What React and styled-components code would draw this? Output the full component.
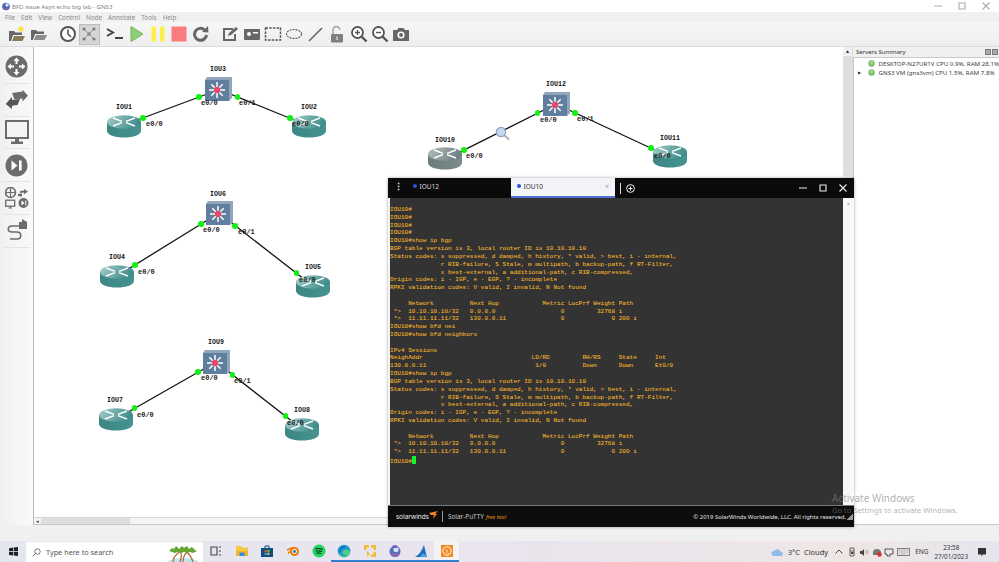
import styled, { createGlobalStyle } from "styled-components";

const GlobalStyle = createGlobalStyle`
  html, body { margin: 0; padding: 0; background: #f0f0f0; }
  * { box-sizing: border-box; }
`;

const Page = styled.div`
  position: relative;
  width: 999px;
  height: 562px;
  overflow: hidden;
  display: flex;
  flex-direction: column;
  font-family: "Noto Sans", "Liberation Sans", sans-serif;
  background: #f0f0f0;
`;

const TitleBar = styled.div`
  height: 12px;
  background: #fff;
  display: flex;
  align-items: center;
  padding-left: 2px;
  gap: 2px;
  font-size: 6.1px;
  color: #7f7f7f;
`;

const TitleText = styled.span`
  flex: 1;
`;

const WindowControls = styled.div`
  display: flex;
  gap: 14px;
  padding-right: 8px;
  line-height: 0;
`;

const MenuBar = styled.div`
  height: 10px;
  background: #f0f0f0;
  display: flex;
  align-items: center;
  padding-left: 5px;
  gap: 6px;
  font-size: 6.3px;
  color: #8a8a8a;
`;

const Toolbar = styled.div`
  height: 25px;
  background: linear-gradient(#f6f6f6, #eeeeee);
  border-bottom: 1px solid #dcdcdc;
  display: flex;
  align-items: center;
  padding-left: 6.5px;
`;

const ToolGroup = styled.div`
  display: flex;
  margin-right: ${(p) => p.$gap || 0}px;
`;

const ToolButton = styled.div`
  width: 21.4px;
  height: 21px;
  display: flex;
  align-items: center;
  justify-content: center;
  background: ${(p) => (p.$pressed ? "#d6d6d6" : "transparent")};
  border: 1px solid ${(p) => (p.$pressed ? "#bdbdbd" : "transparent")};
`;

const Main = styled.div`
  height: 478px;
  display: flex;
`;

const LeftDock = styled.div`
  width: 34px;
  background: linear-gradient(90deg, #f0f0f0, #fafafa);
  border-right: 1px solid #b9b9b9;
  display: flex;
  flex-direction: column;
  padding-top: 4px;
`;

const DockSlot = styled.div`
  height: 32.8px;
  display: flex;
  align-items: center;
  justify-content: center;
  border-bottom: 1px solid #e4e4e4;
  margin: 0 3px;
`;

const CanvasPane = styled.div`
  flex: 1;
  display: grid;
  grid-template-columns: 1fr 9px;
  grid-template-rows: 1fr 7px;
  border-right: 1px solid #ddd;
  border-bottom: 1px solid #c8c8c8;
`;

const Canvas = styled.div`
  position: relative;
  background: #fff;
  overflow: hidden;
`;

const LinkLayer = styled.svg`
  position: absolute;
  left: 0;
  top: 0;
`;

const NodeName = styled.span`
  position: absolute;
  left: ${(p) => p.$x - 34}px;
  top: ${(p) => p.$y - 47 - 4}px;
  transform: translateX(-50%);
  font: bold 6.6px/8px "Liberation Mono", monospace;
  color: #111;
`;

const PortName = styled.span`
  position: absolute;
  left: ${(p) => p.$x - 34}px;
  top: ${(p) => p.$y - 47 - 4}px;
  font: bold 7px/8px "Liberation Mono", monospace;
  color: #1e1e22;
`;

const NodeIcon = styled.div`
  position: absolute;
  left: ${(p) => p.$x - 34}px;
  top: ${(p) => p.$y - 47}px;
  line-height: 0;
`;

const Dot = styled.i`
  position: absolute;
  left: ${(p) => p.$x - 34 - 2.75}px;
  top: ${(p) => p.$y - 47 - 2.75}px;
  width: 5.5px;
  height: 5.5px;
  border-radius: 50%;
  background: #14f014;
`;

const Magnifier = styled.div`
  position: absolute;
  left: ${495 - 34}px;
  top: ${126 - 47}px;
  line-height: 0;
`;

const VScroll = styled.div`
  background: #f1f1f1;
  display: flex;
  flex-direction: column;
  align-items: center;
  padding-top: 1px;
  font-size: 5px;
  line-height: 6px;
  color: #333;
`;

const VThumb = styled.div`
  width: 100%;
  height: 120px;
  margin-top: 2px;
  background: #dedede;
`;

const HScroll = styled.div`
  background: #f4f4f4;
  display: flex;
  align-items: stretch;
  font-size: 5px;
  line-height: 7px;
  color: #333;
  border-top: 1px solid #d6d6d6;
`;

const HArrow = styled.span`
  width: 7px;
  text-align: center;
`;

const HThumb = styled.div`
  width: 89px;
  background: #dedede;
`;

const ServersDock = styled.div`
  width: 146px;
  display: flex;
  flex-direction: column;
  background: #f0f0f0;
`;

const DockHeader = styled.div`
  height: 10px;
  padding-left: 3px;
  display: flex;
  align-items: center;
  justify-content: space-between;
  font-size: 6px;
  color: #333;
`;

const DockButtons = styled.div`
  display: flex;
  gap: 1px;
  padding-right: 1px;
`;

const DockButton = styled.i`
  width: 6px;
  height: 6px;
  background: #a8a8a8;
  border: 1px solid #7a7a7a;
`;

const ServerTree = styled.div`
  flex: 1;
  background: #fff;
  border: 1px solid #c9c9c9;
  border-right: 0;
  padding-top: 0.5px;
`;

const ServerRow = styled.div`
  height: 9.5px;
  display: flex;
  align-items: center;
  padding-left: 4px;
  font-size: 6.15px;
  color: #3c3c3c;
  white-space: nowrap;
`;

const Caret = styled.span`
  flex: none;
  width: 8px;
  font-size: 4px;
  color: #222;
`;

const ServerLed = styled.i`
  flex: none;
  width: 7px;
  height: 7px;
  border-radius: 50%;
  margin: 0 4px 0 1.5px;
  background: radial-gradient(circle at 50% 30%, #a6e58e, #58b04a);
  border: 1px solid #8fb488;
`;

const StatusStrip = styled.div`
  height: 16px;
  background: #f0f0f0;
`;

const Taskbar = styled.div`
  height: 21px;
  display: flex;
  align-items: center;
  background: linear-gradient(90deg, #e4e7ee, #e9e4ee 45%, #ece6ea 75%, #efe6e4 85%, #e4e6ee);
  color: #222;
`;

const StartButton = styled.div`
  width: 26px;
  display: flex;
  justify-content: center;
`;

const SearchBox = styled.div`
  width: 177px;
  height: 20px;
  margin-top: 1px;
  padding-left: 6px;
  background: #fff;
  display: flex;
  align-items: center;
  gap: 5px;
  color: #555;
  font-size: 7.3px;
  overflow: hidden;
`;

const SearchText = styled.span`
  flex: 1;
`;

const TaskIcons = styled.div`
  display: flex;
  margin-left: 0.5px;
  height: 100%;
`;

const TaskIcon = styled.div`
  width: 25.6px;
  height: 100%;
  display: flex;
  align-items: center;
  justify-content: center;
  background: ${(p) => (p.$active ? "#f4f2f5" : "transparent")};
  border-bottom: 2px solid ${(p) => (p.$open ? "#2f7fd0" : "transparent")};
`;

const Tray = styled.div`
  margin-left: auto;
  display: flex;
  align-items: center;
  height: 100%;
  padding-right: 10.5px;
`;

const Weather = styled.span`
  margin: 0 5px 0 4px;
  font-size: 7.5px;
  word-spacing: 2px;
  color: #333;
`;

const TrayIcon = styled.div`
  width: ${(p) => p.$w || 12.5}px;
  display: flex;
  justify-content: center;
  line-height: 0;
`;

const Lang = styled.span`
  font-size: 6.5px;
  margin: 0 6px 0 3.5px;
  color: #333;
`;

const Clock = styled.div`
  text-align: center;
  font-size: 6.3px;
  line-height: 9px;
  color: #333;
  margin-right: 8px;
`;

const PuttyWindow = styled.div`
  position: absolute;
  left: 388px;
  top: 178px;
  width: 466px;
  height: 349px;
  background: #f4f4f4;
  display: flex;
  flex-direction: column;
  box-shadow: 0 0 3px rgba(0, 0, 0, 0.35);
`;

const TabBar = styled.div`
  height: 20px;
  background: #0b0b0b;
  display: flex;
  align-items: stretch;
  color: #eee;
  font-size: 6.5px;
`;

const MoreDots = styled.div`
  width: 20px;
  text-align: center;
  line-height: 18px;
  font-weight: 700;
  font-size: 9px;
`;

const Tab = styled.div`
  width: ${(p) => p.$w}px;
  display: flex;
  align-items: center;
  padding-left: ${(p) => (p.$active ? 5.5 : 4.5)}px;
  gap: 3px;
  padding-bottom: 2px;
  background: ${(p) => (p.$active ? "#f3f4f8" : "transparent")};
  color: ${(p) => (p.$active ? "#333" : "#ddd")};
  border-bottom: 2px solid ${(p) => (p.$active ? "#4f6fd8" : "transparent")};
`;

const TabDot = styled.i`
  width: 4px;
  height: 4px;
  border-radius: 50%;
  background: #2c54e0;
`;

const TabClose = styled.span`
  margin-left: auto;
  margin-right: 6px;
  color: #999;
  font-size: 7px;
`;

const TabTools = styled.div`
  flex: 1;
  display: flex;
  align-items: center;
  padding-left: 5px;
  gap: 5px;
`;

const TabDivider = styled.i`
  width: 1px;
  height: 11px;
  background: #ddd;
`;

const TabWinButtons = styled.div`
  margin-left: auto;
  display: flex;
  gap: 10px;
  padding-right: 6px;
  line-height: 0;
`;

const TermRow = styled.div`
  flex: 1;
  display: flex;
  padding-left: 2px;
  min-height: 0;
`;

const Terminal = styled.pre`
  margin: 0;
  width: 453px;
  background: #333333;
  padding-top: 8px;
  font: 6px/7.81px "Liberation Mono", monospace;
  letter-spacing: 0.03px;
  color: #e4a62e;
  text-shadow: 0 0 0.4px rgba(228, 166, 46, 0.6);
  overflow: hidden;
`;

const Cursor = styled.i`
  display: inline-block;
  width: 4px;
  height: 8px;
  vertical-align: -1.5px;
  background: #18f02a;
`;

const TermScroll = styled.div`
  flex: 1;
  background: #f8f8f8;
  text-align: center;
  font-size: 5px;
  line-height: 10px;
  color: #bbb;
`;

const PuttyFooter = styled.div`
  height: 22px;
  background: #0d0d0d;
  border-top: 1px solid #777;
  display: flex;
  align-items: center;
  padding-left: 8px;
  padding-right: 1px;
  color: #ddd;
`;

const SolarBrand = styled.span`
  font-size: 6.5px;
  color: #eee;
`;

const SolarMark = styled.svg`
  margin-bottom: 3px;
`;

const FooterDivider = styled.i`
  width: 1px;
  height: 11px;
  margin: 0 5px 0 4px;
  background: #999;
`;

const ProductName = styled.span`
  font-size: 6.4px;
  color: #ccc;
`;

const FreeTool = styled.span`
  margin-left: 2px;
  font-size: 5.5px;
  font-style: italic;
  color: #e59a1e;
`;

const Copyright = styled.span`
  margin-left: auto;
  margin-right: 1px;
  font-size: 5.95px;
  color: #e4e4e4;
`;

const Watermark = styled.div`
  position: absolute;
  left: 832px;
  top: 492px;
  color: rgba(125, 125, 125, 0.62);
  white-space: nowrap;
`;

const WatermarkTitle = styled.div`
  font-size: 10px;
  line-height: 12px;
`;

const WatermarkSub = styled.div`
  font-size: 7.6px;
  line-height: 12px;
`;

/* ---- drawings ---- */

const Router = ({ gray }) => {
  const id = gray ? "rg" : "rt";
  return (
    <svg width="34" height="23" viewBox="0 0 34 23">
      <defs>
        <linearGradient id={id} x1="0" x2="1" y1="0" y2="0">
          <stop offset="0" stopColor={gray ? "#6c7c7c" : "#3c8684"} />
          <stop offset="1" stopColor={gray ? "#7c8c8c" : "#459390"} />
        </linearGradient>
        <linearGradient id={id + "t"} x1="0" x2="1" y1="0" y2="0.3">
          <stop offset="0" stopColor={gray ? "#b6c0c0" : "#a9cfcd"} />
          <stop offset="1" stopColor={gray ? "#6f8080" : "#3f8e8c"} />
        </linearGradient>
      </defs>
      <path d="M0 7v9c0 3.6 7.6 6.6 17 6.6s17-3 17-6.6V7z" fill={`url(#${id})`} />
      <ellipse cx="17" cy="7" rx="17" ry="6.8" fill={`url(#${id}t)`} />
      <path
        d="M6 3l9 3.4M6 11l9-3.4M28 3l-9 3.4M28 11l-9-3.4"
        stroke="#fff"
        strokeWidth="1.4"
        fill="none"
      />
    </svg>
  );
};

const Switch = () => (
  <svg width="27" height="25" viewBox="0 0 27 25">
    <path d="M2 0h25v21l-3 3H0V3z" fill="#8fa6bd" />
    <rect x="0" y="3" width="24" height="21" fill="#607f9f" />
    <path
      d="M12 5v16M4 13h16M6.3 7.3l11.4 11.4M17.7 7.3L6.3 18.7"
      stroke="#fff"
      strokeWidth="1.5"
    />
    <circle cx="12" cy="13" r="3.2" fill="#e8476b" />
  </svg>
);

const MagnifierIcon = () => (
  <svg width="15" height="15" viewBox="0 0 15 15">
    <path d="M8.5 8.5l5 4.5" stroke="#b3b3b3" strokeWidth="2.2" strokeLinecap="round" />
    <circle cx="6" cy="6" r="4.6" fill="#c6d8ee" stroke="#8ba3c6" strokeWidth="1.2" />
  </svg>
);

const G = "#666";

const ToolIcon = ({ kind }) => {
  const s = { width: 18, height: 18, viewBox: "0 0 18 18" };
  switch (kind) {
    case "new":
      return (
        <svg {...s}>
          <path d="M1 16V6h5l1.5 1.5H14V10H5l-2 6z" fill={G} />
          <path d="M4 16l2-5h11l-2.5 5z" fill="#8a7a58" />
          <circle cx="13" cy="4" r="2.6" fill="#f5e640" />
        </svg>
      );
    case "open":
      return (
        <svg {...s}>
          <path d="M1 15V5h5l1.5 1.5H14V9H5l-2 6z" fill={G} />
          <path d="M4 15l2-5h11l-2.5 5z" fill="#8c8c8c" />
        </svg>
      );
    case "clock":
      return (
        <svg {...s}>
          <circle cx="9" cy="9" r="7" fill="#fff" stroke="#555" strokeWidth="2" />
          <path d="M9 4.5V9l3 3" fill="none" stroke="#555" strokeWidth="1.6" />
        </svg>
      );
    case "links":
      return (
        <svg {...s}>
          <path d="M5 5l8 8M13 5l-8 8" stroke="#999" strokeWidth="1" />
          <circle cx="4" cy="4" r="1.5" fill="#777" />
          <circle cx="14" cy="4" r="1.5" fill="#777" />
          <circle cx="4" cy="14" r="1.5" fill="#777" />
          <circle cx="14" cy="14" r="1.5" fill="#777" />
          <circle cx="9" cy="9" r="1.8" fill="#888" />
        </svg>
      );
    case "console":
      return (
        <svg {...s}>
          <path d="M1 4l6 3.5L1 11" fill="none" stroke="#444" strokeWidth="2" />
          <path d="M9 13h8" stroke="#444" strokeWidth="2" />
        </svg>
      );
    case "play":
      return (
        <svg {...s}>
          <path d="M3 1.5l12 7.5-12 7.5z" fill="#8ccf76" stroke="#73b45e" />
        </svg>
      );
    case "pause":
      return (
        <svg {...s}>
          <rect x="2.5" y="1.5" width="4.5" height="15" fill="#fbef4e" />
          <rect x="11" y="1.5" width="4.5" height="15" fill="#fbef4e" />
        </svg>
      );
    case "stop":
      return (
        <svg {...s}>
          <rect x="1.5" y="1.5" width="15" height="15" fill="#fb7c7c" />
        </svg>
      );
    case "reload":
      return (
        <svg {...s}>
          <path d="M14.5 10a6 6 0 1 1-2-5.2" fill="none" stroke={G} strokeWidth="3" />
          <path d="M10 7l6.5.5L16 1z" fill={G} />
        </svg>
      );
    case "note":
      return (
        <svg {...s}>
          <path d="M2 3h10v2H4v9h9V9h2v7H2z" fill={G} />
          <path d="M7 11l1-3 7-6 2 2-7 6z" fill={G} />
        </svg>
      );
    case "image":
      return (
        <svg {...s}>
          <rect x="1" y="4" width="16" height="11" rx="1" fill={G} />
          <circle cx="6" cy="9" r="2" fill="#fff" />
          <path d="M10 7h5v1.5h-5z" fill="#fff" />
        </svg>
      );
    case "rect":
      return (
        <svg {...s}>
          <rect x="1.5" y="3" width="15" height="12" fill="none" stroke="#555" strokeWidth="1.5" strokeDasharray="2.5 1.2" />
        </svg>
      );
    case "ellipse":
      return (
        <svg {...s}>
          <ellipse cx="9" cy="9" rx="7.5" ry="4.5" fill="none" stroke="#555" strokeWidth="1.1" strokeDasharray="2 1" />
        </svg>
      );
    case "line":
      return (
        <svg {...s}>
          <path d="M2 16L15 3" stroke={G} strokeWidth="1.6" />
        </svg>
      );
    case "lock":
      return (
        <svg {...s}>
          <path d="M5 9V5a3.4 3.4 0 0 1 6.8 0" fill="none" stroke="#aaa" strokeWidth="1.6" />
          <rect x="3" y="9" width="12" height="8.5" rx="1" fill="#7f7f7f" />
          <rect x="8" y="11.5" width="2" height="3.5" fill="#bbb" />
        </svg>
      );
    case "zoomin":
    case "zoomout":
      return (
        <svg {...s}>
          <circle cx="7.5" cy="7.5" r="5.5" fill="#fff" stroke="#555" strokeWidth="1.8" />
          <path d="M11.5 11.5l5 5" stroke="#555" strokeWidth="2.4" />
          <path d={kind === "zoomin" ? "M5 7.5h5M7.5 5v5" : "M5 7.5h5"} stroke="#555" strokeWidth="1.4" />
        </svg>
      );
    default:
      return (
        <svg {...s}>
          <path d="M1 5h4l1.5-2h5L13 5h4v11H1z" fill={G} />
          <circle cx="9" cy="10" r="3.6" fill="#fff" />
          <circle cx="9" cy="10" r="2" fill={G} />
        </svg>
      );
  }
};

const DockIcon = ({ kind }) => {
  const D = "#6c6c6c";
  if (kind === "router")
    return (
      <svg width="23" height="23" viewBox="0 0 23 23">
        <circle cx="11.5" cy="11.5" r="11" fill={D} />
        <path
          d="M11.5 2.5l3 3.5h-2v3h-2V6h-2zM11.5 20.5l3-3.5h-2v-3h-2v3h-2zM2.5 11.5l3.5-3v2h3v2H6v2zM20.5 11.5l-3.5-3v2h-3v2h3v2z"
          fill="#fff"
        />
      </svg>
    );
  if (kind === "switch")
    return (
      <svg width="24" height="21" viewBox="0 0 24 21">
        <path d="M7 4l10.5-1.5V.7L23 6.7l-5.5 5.8V9.5L9.5 10.5z" fill={D} />
        <path d="M.7 15L7 8v3l8-1-2.5 6-5.5.7V20z" fill="#555" />
      </svg>
    );
  if (kind === "monitor")
    return (
      <svg width="24" height="25" viewBox="0 0 24 25">
        <rect x="1" y="1" width="22" height="17" fill="#f4f4f4" stroke={D} strokeWidth="2" />
        <path d="M10 18h4v3.5h4V24H6v-2.5h4z" fill={D} />
      </svg>
    );
  if (kind === "skip")
    return (
      <svg width="23" height="23" viewBox="0 0 23 23">
        <circle cx="11.5" cy="11.5" r="11" fill={D} />
        <path d="M6.5 6.5l6 5-6 5z" fill="#fff" />
        <rect x="14" y="6.5" width="2.6" height="10" fill="#fff" />
      </svg>
    );
  if (kind === "all")
    return (
      <svg width="24" height="22" viewBox="0 0 24 22">
        <circle cx="5.5" cy="5.5" r="5" fill="none" stroke={D} strokeWidth="1.6" />
        <path d="M5.5 1v9M1 5.5h9" stroke={D} strokeWidth="1.2" />
        <path d="M15 4l4-.6V2l4 2.6-4 2.6V5.5l-4 .6zM13 7l4-.6V5l.01 4.6L13 9z" fill={D} />
        <rect x="0.7" y="13.2" width="9" height="6" fill="none" stroke={D} strokeWidth="1.3" />
        <path d="M3.5 21h3.5M5.2 19v2" stroke={D} />
        <circle cx="18.5" cy="16" r="5" fill={D} />
        <path d="M16.5 13.5l3 2.5-3 2.5zM20.3 13.5h1v5h-1z" fill="#fff" />
      </svg>
    );
  return (
    <svg width="24" height="24" viewBox="0 0 24 24">
      <path d="M15 7H7c-5 0-5 6 0 6h5c5 0 5 7 0 7H5" fill="none" stroke={D} strokeWidth="1.6" />
      <rect x="14" y="3" width="8" height="7" fill={D} />
      <path d="M17 0l5 3h-5z" fill={D} />
    </svg>
  );
};

const WinLogo = () => (
  <svg width="9" height="9" viewBox="0 0 9 9">
    <path d="M0 1.2l4-.6v3.6H0zM4.7.5L9 0v4.2H4.7zM0 4.9h4v3.6l-4-.6zM4.7 4.9H9V9l-4.3-.6z" fill="#222" />
  </svg>
);

const SearchGlass = () => (
  <svg width="9" height="9" viewBox="0 0 9 9">
    <circle cx="5.5" cy="3.5" r="2.7" fill="none" stroke="#555" strokeWidth=".8" />
    <path d="M3.5 5.5L.7 8.3" stroke="#555" strokeWidth=".9" />
  </svg>
);

const TreeDoodle = () => (
  <svg width="38" height="20" viewBox="0 0 38 20">
    <ellipse cx="18" cy="21" rx="16" ry="5" fill="#bfe4ee" />
    <path d="M8 20c0-6 4-8 7-10 3 2 1 6 0 10M18 20c0-5 2-8 4-10 3 3 5 6 6 10" fill="none" stroke="#b3662f" strokeWidth="1.2" />
    <path d="M4 9l3-3 2 1 2-3 3 3 3-3 2 2 3-2 2 3 3-2 3 3 2 1-4 2-3-1-3 1-3-1-3 1-3-1-3 1z" fill="#63a632" />
  </svg>
);

const AppIcon = ({ kind }) => {
  const s = { width: 14, height: 14, viewBox: "0 0 14 14" };
  switch (kind) {
    case "taskview":
      return (
        <svg {...s}>
          <path d="M2 3h6v8H2zM10 3h2M10 7h2M10 11h2" fill="none" stroke="#444" strokeWidth="1.1" />
        </svg>
      );
    case "explorer":
      return (
        <svg {...s}>
          <path d="M1 2h5l1 1.5h6V12H1z" fill="#f5c842" />
          <rect x="1" y="7" width="12" height="5" fill="#f0b52d" />
          <rect x="4.5" y="8.5" width="5" height="3.5" fill="#2f8fd8" />
        </svg>
      );
    case "store":
      return (
        <svg {...s}>
          <path d="M1 4h12v9H1z" fill="#0f4d82" />
          <path d="M5 4V2h4v2" fill="none" stroke="#0f4d82" />
          <rect x="4.5" y="6" width="2.2" height="2.2" fill="#e8502c" />
          <rect x="7.3" y="6" width="2.2" height="2.2" fill="#7cbb2c" />
          <rect x="4.5" y="8.8" width="2.2" height="2.2" fill="#2ea3e8" />
          <rect x="7.3" y="8.8" width="2.2" height="2.2" fill="#f5b82c" />
        </svg>
      );
    case "blender":
      return (
        <svg {...s}>
          <path d="M1 6l6-2.5M2 9l5-3" stroke="#e87d0d" strokeWidth="1.6" />
          <circle cx="8.5" cy="7.5" r="4.5" fill="#e87d0d" />
          <circle cx="8.5" cy="7.5" r="2.4" fill="#fff" />
          <circle cx="8.5" cy="7.5" r="1.4" fill="#2a6aa8" />
        </svg>
      );
    case "spotify":
      return (
        <svg {...s}>
          <circle cx="7" cy="7" r="6.5" fill="#1ed760" />
          <path d="M3.2 5c2.5-.8 5.5-.6 7.6.6M3.8 7.2c2-.6 4.5-.4 6.2.6M4.4 9.2c1.6-.4 3.5-.3 4.8.5" fill="none" stroke="#111" strokeWidth="1" />
        </svg>
      );
    case "edge":
      return (
        <svg {...s}>
          <circle cx="7" cy="7" r="6.3" fill="#1b9ad6" />
          <path d="M13 8c-.7 3.2-3.5 5.3-6 5.3-2.5 0-4.4-2-4-4 .5 2 2.6 3 4.6 2.8 1.2-.1 2.2-.6 2-1.2-2.6.2-4.4-1-4.2-2.8.2-1.5 2-2.5 4-2.3 2 .2 3.6 1.6 3.6 2.2z" fill="#4ed37c" />
          <path d="M3 8c0-3 2-5 5-4.8" fill="none" stroke="#0c5da8" strokeWidth="1.2" />
        </svg>
      );
    case "yellow":
      return (
        <svg {...s}>
          <path d="M1 1h5v2.5H3.5V6H1zM8 1h5v5h-2.5V3.5H8zM8 8h5v5H8v-2.5h2.5V8zM4 7l3 3-3 3z" fill="#eebf34" />
        </svg>
      );
    case "gns":
      return (
        <svg {...s}>
          <circle cx="7" cy="7.5" r="5.5" fill="#5470b8" />
          <circle cx="8" cy="5.5" r="2.6" fill="#d6e0f2" />
          <path d="M3 10l7-1 1 2-5 2z" fill="#a05bb0" />
          <path d="M4 2l3-1 3 1-1 2H5z" fill="#7a5ac0" />
        </svg>
      );
    case "shark":
      return (
        <svg {...s}>
          <path d="M1 13C5 11 8 6 10 1c1 4 2 9 3 12z" fill="#1a6fc4" />
          <path d="M9 9c1 1 2 2 4 2v2H6z" fill="#4fa0e8" />
        </svg>
      );
    default:
      return (
        <svg {...s}>
          <rect x="1" y="1" width="12" height="12" fill="#f08a1e" />
          <circle cx="7" cy="7" r="4.2" fill="none" stroke="#fff" strokeWidth=".9" />
          <path d="M5.6 5l2 2-2 2M7.5 9.4h1.5" fill="none" stroke="#fff" strokeWidth=".8" />
        </svg>
      );
  }
};

const TrayGlyph = ({ kind }) => {
  const c = "#444";
  const s = { width: 10, height: 10, viewBox: "0 0 10 10" };
  switch (kind) {
    case "chevron":
      return (
        <svg {...s}>
          <path d="M1.5 6.5L5 3l3.5 3.5" fill="none" stroke={c} />
        </svg>
      );
    case "usb":
      return (
        <svg {...s}>
          <path d="M3 1h4v8H3zM3 4h4" fill="none" stroke={c} strokeWidth=".8" />
          <rect x="4" y="5" width="2.5" height="2" fill={c} />
        </svg>
      );
    case "sound":
      return (
        <svg {...s}>
          <path d="M1 4h2l2-2v7L3 7H1z" fill={c} />
          <path d="M6.5 3.5a2.5 2.5 0 0 1 0 3M8 2.5a4 4 0 0 1 0 5" fill="none" stroke="#888" strokeWidth=".7" />
        </svg>
      );
    case "wifi":
      return (
        <svg {...s}>
          <path d="M1 6a4 4 0 0 1 8 0v2H1z" fill="#777" />
          <circle cx="7.5" cy="7.5" r="2.2" fill="#d92b2b" />
        </svg>
      );
    case "net":
      return (
        <svg {...s}>
          <path d="M1 2h8v5H6v2H3V7H1z" fill="none" stroke={c} strokeWidth=".9" />
        </svg>
      );
    default:
      return (
        <svg {...s}>
          <path d="M1 1h8v6.5H6L4.5 9.5V7.5H1z" fill="#333" />
        </svg>
      );
  }
};

const Keyboard = () => (
  <svg width="13" height="8" viewBox="0 0 13 8">
    <rect x=".5" y=".5" width="12" height="7" fill="#e3e3e3" stroke="#666" strokeWidth=".8" />
    <path d="M2 2h9M2 4h9M4 6h5" stroke="#888" strokeWidth=".7" strokeDasharray="1 .6" />
  </svg>
);

const WindowGlyph = ({ kind, color = "#aaa" }) => {
  const d = { min: "M1 5h8", max: "M2 2h6v6H2z", close: "M1.5 1.5l7 7M8.5 1.5l-7 7" }[kind];
  return (
    <svg width="10" height="10" viewBox="0 0 10 10">
      <path d={d} fill="none" stroke={color} strokeWidth={kind === "min" ? 1 : 1.1} />
    </svg>
  );
};

const GnsLogo = () => (
  <svg width="8" height="9" viewBox="0 0 8 9">
    <circle cx="4" cy="4.5" r="3.8" fill="#3f63b5" />
    <circle cx="5" cy="3" r="1.7" fill="#d9e4f5" />
    <path d="M1 6l5-.8-1 3z" fill="#9a55ad" />
  </svg>
);

const PlusCircle = () => (
  <svg width="9" height="9" viewBox="0 0 9 9">
    <circle cx="4.5" cy="4.5" r="3.9" fill="none" stroke="#eee" />
    <path d="M2.5 4.5h4M4.5 2.5v4" stroke="#eee" />
  </svg>
);

const Grip = () => (
  <svg width="6" height="6" viewBox="0 0 6 6">
    <path d="M5 0h1v6H0V5h1V4h1V3h1V2h1V1h1z" fill="#999" />
  </svg>
);

/* ---- data ---- */

const routers = [
  { x: 107, y: 115 },
  { x: 292, y: 115 },
  { x: 100, y: 265 },
  { x: 296, y: 275 },
  { x: 99, y: 408 },
  { x: 285, y: 418 },
  { x: 428, y: 147, gray: true },
  { x: 653, y: 145 },
];

const switches = [
  { x: 205, y: 77 },
  { x: 206, y: 201 },
  { x: 203, y: 350 },
  { x: 543, y: 92 },
];

const nodeNames = [
  ["IOU1", 124, 108], ["IOU2", 309, 108], ["IOU3", 218, 70],
  ["IOU4", 117, 258], ["IOU5", 313, 268], ["IOU6", 218, 195],
  ["IOU7", 115, 401], ["IOU8", 302, 411], ["IOU9", 216, 343],
  ["IOU10", 445, 141], ["IOU11", 670, 139], ["IOU12", 556, 85],
];

const links = [
  [124, 125, 218, 90], [218, 89, 309, 126],
  [117, 276, 219, 213], [219, 213, 313, 286],
  [116, 419, 216, 362], [216, 362, 302, 429],
  [445, 159.6, 556, 104], [556, 104, 670, 157],
];

const dots = [
  [143, 118], [199, 97], [237.5, 97], [290, 118],
  [135, 265], [201, 224], [235, 226], [296.5, 273],
  [134.5, 408], [198, 372], [232.5, 375], [285.5, 416],
  [464, 150], [537.5, 113], [575, 113], [651, 148],
];

const ports = [
  ["e0/0", 146, 124], ["e0/0", 201, 103], ["e0/1", 239, 103], ["e0/0", 292, 124],
  ["e0/0", 138, 272], ["e0/0", 203, 230], ["e0/1", 238, 232], ["e0/0", 299, 280],
  ["e0/0", 137, 415], ["e0/0", 201, 378], ["e0/1", 234, 381], ["e0/0", 287, 423],
  ["e0/0", 466, 156], ["e0/0", 540, 120], ["e0/1", 577, 119], ["e0/0", 654, 156],
];

const bgpTable = `BGP table version is 3, local router ID is 10.10.10.10
Status codes: s suppressed, d damped, h history, * valid, > best, i - internal,
              r RIB-failure, S Stale, m multipath, b backup-path, f RT-Filter,
              x best-external, a additional-path, c RIB-compressed,
Origin codes: i - IGP, e - EGP, ? - incomplete
RPKI validation codes: V valid, I invalid, N Not found

     Network          Next Hop            Metric LocPrf Weight Path
 *>  10.10.10.10/32   0.0.0.0                  0         32768 i
 *>  11.11.11.11/32   130.0.0.11               0             0 200 i`;

const termLines = `IOU10#
IOU10#
IOU10#
IOU10#
IOU10#show ip bgp
${bgpTable}
IOU10#show bfd nei
IOU10#show bfd neighbors

IPv4 Sessions
NeighAddr                              LD/RD         RH/RS     State     Int
130.0.0.11                              1/0          Down      Down      Et0/0
IOU10#show ip bgp
${bgpTable}
IOU10#`;

const toolGroups = [
  { gap: 8, items: ["new", "open"] },
  { gap: 4.5, items: ["clock", "links"] },
  { gap: 8, items: ["console", "play", "pause", "stop", "reload"] },
  { gap: 0, items: ["note", "image", "rect", "ellipse", "line", "lock", "zoomin", "zoomout", "camera"] },
];

const dockItems = ["router", "switch", "monitor", "skip", "all", "cable"];

const menus = ["File", "Edit", "View", "Control", "Node", "Annotate", "Tools", "Help"];

const apps = [
  { kind: "taskview" },
  { kind: "explorer" },
  { kind: "store" },
  { kind: "blender" },
  { kind: "spotify" },
  { kind: "edge", open: true },
  { kind: "yellow", open: true },
  { kind: "gns", open: true },
  { kind: "shark", open: true },
  { kind: "putty", open: true, active: true },
];

const App = () => {
  return (
    <Page>
      <GlobalStyle />
      <TitleBar>
        <GnsLogo />
        <TitleText>BFD issue Asyn echo big lab - GNS3</TitleText>
        <WindowControls>
          <WindowGlyph kind="min" />
          <WindowGlyph kind="max" />
          <WindowGlyph kind="close" />
        </WindowControls>
      </TitleBar>
      <MenuBar>
        {menus.map((m) => (
          <span key={m}>{m}</span>
        ))}
      </MenuBar>
      <Toolbar>
        {toolGroups.map((group) => (
          <ToolGroup key={group.items[0]} $gap={group.gap}>
            {group.items.map((item) => (
              <ToolButton key={item} $pressed={item === "links"}>
                <ToolIcon kind={item} />
              </ToolButton>
            ))}
          </ToolGroup>
        ))}
      </Toolbar>
      <Main>
        <LeftDock>
          {dockItems.map((item) => (
            <DockSlot key={item}>
              <DockIcon kind={item} />
            </DockSlot>
          ))}
        </LeftDock>
        <CanvasPane>
          <Canvas>
            <LinkLayer width="809" height="470" viewBox="34 47 809 470">
              {links.map(([x1, y1, x2, y2]) => (
                <line key={`${x1}-${y1}-${x2}`} x1={x1} y1={y1} x2={x2} y2={y2} stroke="#141414" strokeWidth="1.3" />
              ))}
            </LinkLayer>
            {routers.map((r) => (
              <NodeIcon key={`${r.x}-${r.y}`} $x={r.x} $y={r.y}>
                <Router gray={r.gray} />
              </NodeIcon>
            ))}
            {switches.map((r) => (
              <NodeIcon key={`${r.x}-${r.y}`} $x={r.x} $y={r.y}>
                <Switch />
              </NodeIcon>
            ))}
            {dots.map(([x, y]) => (
              <Dot key={`${x}-${y}`} $x={x} $y={y} />
            ))}
            {nodeNames.map(([name, x, y]) => (
              <NodeName key={name} $x={x} $y={y}>
                {name}
              </NodeName>
            ))}
            {ports.map(([name, x, y]) => (
              <PortName key={`${x}-${y}`} $x={x} $y={y}>
                {name}
              </PortName>
            ))}
            <Magnifier>
              <MagnifierIcon />
            </Magnifier>
          </Canvas>
          <VScroll>
            ▲
            <VThumb />
          </VScroll>
          <HScroll>
            <HArrow>◂</HArrow>
            <HThumb />
          </HScroll>
        </CanvasPane>
        <ServersDock>
          <DockHeader>
            Servers Summary
            <DockButtons>
              <DockButton />
              <DockButton />
            </DockButtons>
          </DockHeader>
          <ServerTree>
            <ServerRow>
              <Caret />
              <ServerLed />
              DESKTOP-N27UR1V CPU 0.9%, RAM 28.1%
            </ServerRow>
            <ServerRow>
              <Caret>▶</Caret>
              <ServerLed />
              GNS3 VM (gns3vm) CPU 1.5%, RAM 7.8%
            </ServerRow>
          </ServerTree>
        </ServersDock>
      </Main>
      <StatusStrip />
      <Taskbar>
        <StartButton>
          <WinLogo />
        </StartButton>
        <SearchBox>
          <SearchGlass />
          <SearchText>Type here to search</SearchText>
          <TreeDoodle />
        </SearchBox>
        <TaskIcons>
          {apps.map((app) => (
            <TaskIcon key={app.kind} $open={app.open} $active={app.active}>
              <AppIcon kind={app.kind} />
            </TaskIcon>
          ))}
        </TaskIcons>
        <Tray>
          <svg width="13" height="8" viewBox="0 0 13 8">
            <path d="M3 8a2.5 2.5 0 0 1 0-5 4 4 0 0 1 7 1 2 2 0 0 1 0 4z" fill="#8fbce8" />
          </svg>
          <Weather>3°C Cloudy</Weather>
          <TrayIcon>
            <TrayGlyph kind="chevron" />
          </TrayIcon>
          <TrayIcon>
            <TrayGlyph kind="usb" />
          </TrayIcon>
          <TrayIcon>
            <TrayGlyph kind="sound" />
          </TrayIcon>
          <TrayIcon>
            <TrayGlyph kind="wifi" />
          </TrayIcon>
          <TrayIcon>
            <TrayGlyph kind="net" />
          </TrayIcon>
          <TrayIcon $w={16}>
            <Keyboard />
          </TrayIcon>
          <Lang>ENG</Lang>
          <Clock>
            23:58
            <br />
            27/01/2023
          </Clock>
          <TrayIcon>
            <TrayGlyph kind="note" />
          </TrayIcon>
        </Tray>
      </Taskbar>

      <PuttyWindow>
        <TabBar>
          <MoreDots>⋮</MoreDots>
          <Tab $w={103}>
            <TabDot />
            IOU12
          </Tab>
          <Tab $w={104} $active>
            <TabDot />
            IOU10
            <TabClose>×</TabClose>
          </Tab>
          <TabTools>
            <TabDivider />
            <PlusCircle />
            <TabWinButtons>
              <WindowGlyph kind="min" color="#eee" />
              <WindowGlyph kind="max" color="#eee" />
              <WindowGlyph kind="close" color="#eee" />
            </TabWinButtons>
          </TabTools>
        </TabBar>
        <TermRow>
          <Terminal>
            {termLines}
            <Cursor />
          </Terminal>
          <TermScroll>▲</TermScroll>
        </TermRow>
        <PuttyFooter>
          <SolarBrand>solarwinds</SolarBrand>
          <SolarMark width="9" height="8" viewBox="0 0 9 8">
            <path d="M0 2l9-2-3 3 2 0-4 5 1-4H2z" fill="#f2831f" />
          </SolarMark>
          <FooterDivider />
          <ProductName>Solar-PuTTY</ProductName>
          <FreeTool>free tool</FreeTool>
          <Copyright>© 2019 SolarWinds Worldwide, LLC. All rights reserved.</Copyright>
          <Grip />
        </PuttyFooter>
      </PuttyWindow>

      <Watermark>
        <WatermarkTitle>Activate Windows</WatermarkTitle>
        <WatermarkSub>Go to Settings to activate Windows.</WatermarkSub>
      </Watermark>
    </Page>
  );
};

export default App;
